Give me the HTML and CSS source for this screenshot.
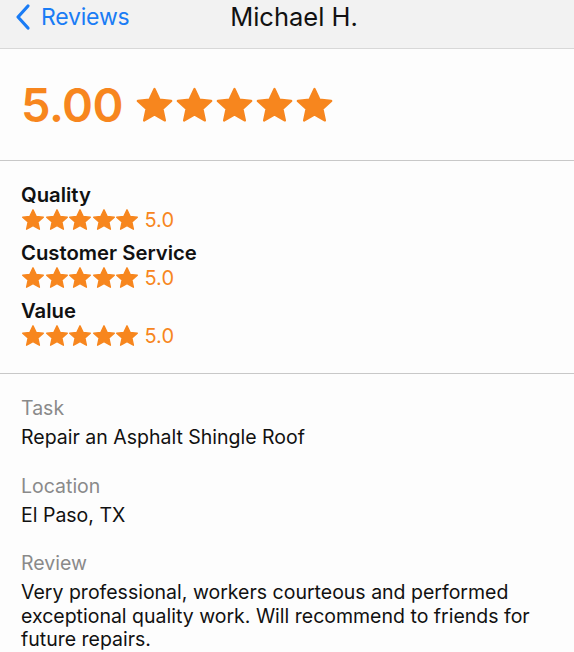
FILE: index.html
```html
<!DOCTYPE html>
<html>
<head>
<meta charset="utf-8">
<link rel="stylesheet" href="styles.css">
</head>
<body>
<svg width="0" height="0" class="defs">
  <defs>
    <symbol id="star" viewBox="0 0 24 24">
      <polygon points="12,1.8 15.1,8.4 22.3,9.2 16.9,14.1 18.4,21.2 12,17.6 5.6,21.2 7.1,14.1 1.7,9.2 8.9,8.4" fill="#f7861e" stroke="#f7861e" stroke-width="1.4" stroke-linejoin="round"/>
    </symbol>
  </defs>
</svg>
<header class="nav">
  <div class="back">
    <svg class="chev" width="18" height="28" viewBox="0 0 18 28"><path d="M14 3 L4 14 L14 25" fill="none" stroke="#1a7cf5" stroke-width="3.2" stroke-linecap="round" stroke-linejoin="round"/></svg>
    <span>Reviews</span>
  </div>
  <div class="title">Michael H.</div>
</header>
<section class="overall">
  <span class="score">5.00</span>
  <span class="bigstars">
    <svg><use href="#star"/></svg><svg><use href="#star"/></svg><svg><use href="#star"/></svg><svg><use href="#star"/></svg><svg><use href="#star"/></svg>
  </span>
</section>
<section class="cats">
  <div class="cat">
    <div class="cat-name">Quality</div>
    <div class="cat-row"><span class="smallstars"><svg><use href="#star"/></svg><svg><use href="#star"/></svg><svg><use href="#star"/></svg><svg><use href="#star"/></svg><svg><use href="#star"/></svg></span><span class="cat-val">5.0</span></div>
  </div>
  <div class="cat">
    <div class="cat-name">Customer Service</div>
    <div class="cat-row"><span class="smallstars"><svg><use href="#star"/></svg><svg><use href="#star"/></svg><svg><use href="#star"/></svg><svg><use href="#star"/></svg><svg><use href="#star"/></svg></span><span class="cat-val">5.0</span></div>
  </div>
  <div class="cat">
    <div class="cat-name">Value</div>
    <div class="cat-row"><span class="smallstars"><svg><use href="#star"/></svg><svg><use href="#star"/></svg><svg><use href="#star"/></svg><svg><use href="#star"/></svg><svg><use href="#star"/></svg></span><span class="cat-val">5.0</span></div>
  </div>
</section>
<section class="details">
  <div class="field">
    <div class="label">Task</div>
    <div class="value">Repair an Asphalt Shingle Roof</div>
  </div>
  <div class="field">
    <div class="label">Location</div>
    <div class="value">El Paso, TX</div>
  </div>
  <div class="field">
    <div class="label">Review</div>
    <div class="value">Very professional, workers courteous and performed exceptional quality work. Will recommend to friends for future repairs.</div>
  </div>
</section>
</body>
</html>
```
FILE: styles.css
```css
html, body {
  margin: 0;
  padding: 0;
  background: #fdfdfd;
  font-family: Inter, "Noto Sans", "Liberation Sans", sans-serif;
  color: #111;
  overflow: hidden;
}
.defs { position: absolute; }
.nav {
  height: 48px;
  background: #f2f2f2;
  border-bottom: 1px solid #d8d8d8;
  display: flex;
  align-items: flex-start;
  position: relative;
}
.back {
  display: flex;
  align-items: center;
  padding-left: 14px;
  gap: 9px;
  height: 34px;
  color: #1a7cf5;
  font-size: 23px;
  letter-spacing: -0.2px;
}
.chev { display: block; }
.title {
  position: absolute;
  left: 0; right: 0;
  top: 0;
  height: 34px;
  line-height: 34px;
  text-align: center;
  font-size: 25.5px;
  color: #111;
  padding-left: 14px;
}
.overall {
  height: 111px;
  border-bottom: 1px solid #c8c8c8;
  display: flex;
  align-items: center;
  padding-left: 21px;
  gap: 12px;
}
.score {
  font-size: 47px;
  font-weight: 600;
  color: #f7861e;
  letter-spacing: -0.5px;
}
.bigstars { display: flex; gap: 1px; margin-top: 2px; }
.bigstars svg { width: 39px; height: 39px; }
.cats {
  border-bottom: 1px solid #c8c8c8;
  padding: 22px 0 25px 21px;
  display: flex;
  flex-direction: column;
  gap: 9px;
}
.cat-name {
  font-size: 20.3px;
  font-weight: 600;
  line-height: 24px;
}
.cat-row { display: flex; align-items: center; height: 25px; }
.smallstars { display: flex; gap: 0; }
.smallstars svg { width: 24px; height: 24px; margin-right: -0.5px; }
.cat-val {
  color: #f7861e;
  font-size: 20px;
  margin-left: 6px;
}
.details {
  padding: 22px 21px 0 21px;
  display: flex;
  flex-direction: column;
  gap: 24px;
}
.label {
  color: #8a8a8a;
  font-size: 19.5px;
  line-height: 24px;
  margin-bottom: 6px;
}
.value {
  font-size: 19.5px;
  line-height: 23.5px;
  color: #111;
}
```
